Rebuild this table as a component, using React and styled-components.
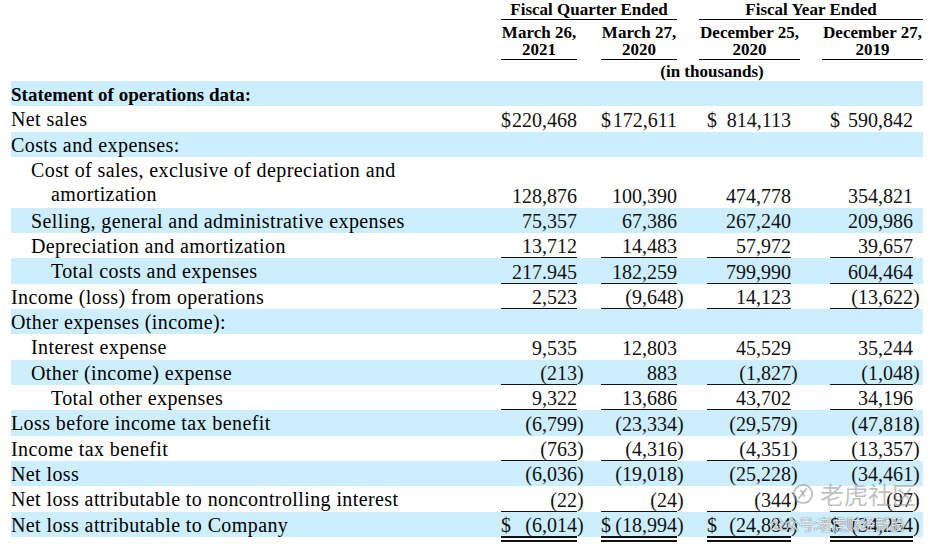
import React from 'react';
import styled, { createGlobalStyle, css } from 'styled-components';

const GlobalStyle = createGlobalStyle`
  html, body {
    margin: 0;
    padding: 0;
    background: #fff;
  }
  body {
    font-family: 'Liberation Serif', 'Times New Roman', serif;
    color: #111;
  }
`;

const COLS = '490px 100px 98px 123px 101px';

// where the figure box (and its rule) sits inside each of the four column cells
const FIG = [
  { ml: 0, w: 76 },
  { ml: 0, w: 76 },
  { ml: 8, w: 84 },
  { ml: 8, w: 83 },
];
const HEAD = [76, 76, 101, 101];

const rows = [
  { label: 'Statement of operations data:', bold: true },
  { label: 'Net sales', values: ['$220,468', '$172,611', '$ 814,113', '$ 590,842'] },
  { label: 'Costs and expenses:' },
  {
    label: 'Cost of sales, exclusive of depreciation and',
    more: 'amortization',
    indent: 1,
    values: ['128,876', '100,390', '474,778', '354,821'],
  },
  { label: 'Selling, general and administrative expenses', indent: 1, values: ['75,357', '67,386', '267,240', '209,986'] },
  { label: 'Depreciation and amortization', indent: 1, rule: 'single', values: ['13,712', '14,483', '57,972', '39,657'] },
  { label: 'Total costs and expenses', indent: 2, rule: 'single', values: ['217.945', '182,259', '799,990', '604,464'] },
  { label: 'Income (loss) from operations', rule: 'single', values: ['2,523', '(9,648)', '14,123', '(13,622)'] },
  { label: 'Other expenses (income):' },
  { label: 'Interest expense', indent: 1, values: ['9,535', '12,803', '45,529', '35,244'] },
  { label: 'Other (income) expense', indent: 1, rule: 'single', values: ['(213)', '883', '(1,827)', '(1,048)'] },
  { label: 'Total other expenses', indent: 2, rule: 'single', values: ['9,322', '13,686', '43,702', '34,196'] },
  { label: 'Loss before income tax benefit', values: ['(6,799)', '(23,334)', '(29,579)', '(47,818)'] },
  { label: 'Income tax benefit', rule: 'single', values: ['(763)', '(4,316)', '(4,351)', '(13,357)'] },
  { label: 'Net loss', values: ['(6,036)', '(19,018)', '(25,228)', '(34,461)'] },
  { label: 'Net loss attributable to noncontrolling interest', rule: 'single', values: ['(22)', '(24)', '(344)', '(97)'] },
  { label: 'Net loss attributable to Company', rule: 'double', values: ['$ (6,014)', '$(18,994)', '$ (24,884)', '$ (34,264)'] },
];

const parse = (raw) => {
  const dollar = raw.startsWith('$');
  const rest = raw.replace('$', '').trim();
  const neg = rest.endsWith(')');
  return { dollar, num: neg ? rest.slice(0, -1) : rest, neg };
};

const Page = styled.div`
  position: relative;
  width: 912px;
  height: 553px;
  padding-left: 11px;
  overflow: hidden;
`;

const HeadRow = styled.div`
  display: grid;
  grid-template-columns: ${COLS};
  padding-top: ${(p) => p.$top}px;
  font-size: 17px;
  font-weight: 700;
  line-height: 17px;
  text-align: center;
  color: #000;
`;

const HeadCell = styled.div`
  grid-column: ${(p) => p.$col};
`;

const HeadBox = styled.div`
  width: ${(p) => p.$w}px;
  padding-bottom: 1px;
  border-bottom: ${(p) => (p.$ruled ? '1px solid #000' : 'none')};
`;

const Row = styled.div`
  display: grid;
  grid-template-columns: ${COLS};
  align-items: end;
  background: ${(p) => (p.$shaded ? '#cceeff' : 'transparent')};
  font-size: 20px;
`;

const Label = styled.div`
  padding-top: 2px;
  padding-left: ${(p) => p.$indent * 20}px;
  line-height: 23.33px;
  font-weight: ${(p) => (p.$bold ? 700 : 400)};
  font-size: ${(p) => (p.$bold ? 19 : 20)}px;
  letter-spacing: ${(p) => (p.$bold ? 0 : 0.4)}px;
  white-space: nowrap;
  color: #000;
`;

const Wrapped = styled.span`
  display: block;
  padding-left: 20px;
  line-height: 25.33px;
`;

const Cell = styled.div`
  display: flex;
  align-items: flex-end;
`;

const Figure = styled.div`
  position: relative;
  margin-left: ${(p) => p.$ml}px;
  width: ${(p) => p.$w}px;
  display: flex;
  justify-content: space-between;
  line-height: 21px;
  border-bottom: 1px solid ${(p) => (p.$rule === 'single' ? '#111' : 'transparent')};

  ${(p) =>
    p.$rule === 'double' &&
    css`
      &::after {
        content: '';
        position: absolute;
        left: 0;
        right: 0;
        top: 100%;
        height: 2px;
        border-top: 2px solid #111;
        border-bottom: 2px solid #111;
      }
    `}
`;

const Paren = styled.span`
  line-height: 21px;
  padding-bottom: 1px;
  white-space: pre;
`;

const Watermark = styled.div`
  position: absolute;
  left: ${(p) => p.$x}px;
  top: ${(p) => p.$y}px;
  display: flex;
  align-items: center;
  gap: ${(p) => p.$gap || 0}px;
  font-family: 'Noto Sans CJK SC', sans-serif;
  font-size: ${(p) => p.$size}px;
  line-height: 1;
  color: ${(p) => p.$color};
  text-shadow: ${(p) => p.$shadow || 'none'};
  pointer-events: none;
  white-space: nowrap;
`;

const Logo = ({ size, stroke }) => (
  <svg width={size} height={size} viewBox="0 0 24 24" fill="none" stroke={stroke} strokeWidth="2">
    <circle cx="12" cy="12" r="10" />
    <path d="M7 17 C10 14 13 9 16 6" />
    <path d="M9 8 C11 9 13 11 13 15" />
  </svg>
);

const Value = ({ raw, col, rule }) => {
  const { dollar, num, neg } = parse(raw);
  return (
    <Cell>
      <Figure $ml={FIG[col].ml} $w={FIG[col].w} $rule={rule}>
        <span>{dollar ? '$' : ''}</span>
        <span>{num}</span>
      </Figure>
      {neg && <Paren>)</Paren>}
    </Cell>
  );
};

const App = () => {
  return (
    <Page>
      <GlobalStyle />
      <HeadRow $top={1}>
        <div />
        <HeadCell $col="2 / 4">
          <HeadBox $w={176} $ruled>
            Fiscal Quarter Ended
          </HeadBox>
        </HeadCell>
        <HeadCell $col="4 / 6">
          <HeadBox $w={224} $ruled>
            Fiscal Year Ended
          </HeadBox>
        </HeadCell>
      </HeadRow>
      <HeadRow $top={4}>
        <div />
        {[
          ['March 26,', '2021'],
          ['March 27,', '2020'],
          ['December 25,', '2020'],
          ['December 27,', '2019'],
        ].map(([a, b], i) => (
          <HeadCell key={a + b} $col={`${i + 2}`}>
            <HeadBox $w={HEAD[i]} $ruled>
              {a}
              <br />
              {b}
            </HeadBox>
          </HeadCell>
        ))}
      </HeadRow>
      <HeadRow $top={3}>
        <div />
        <HeadCell $col="2 / 6">
          <HeadBox $w={422}>(in thousands)</HeadBox>
        </HeadCell>
      </HeadRow>

      {rows.map((r, i) => (
        <Row key={r.label} $shaded={i % 2 === 0}>
          <Label $indent={r.indent || 0} $bold={r.bold}>
            {r.label}
            {r.more && <Wrapped>{r.more}</Wrapped>}
          </Label>
          {r.values
            ? r.values.map((v, c) => <Value key={c} raw={v} col={c} rule={r.rule} />)
            : null}
        </Row>
      ))}

      <Watermark $x={792} $y={482} $size={24} $gap={6} $color="rgba(150,150,150,0.6)">
        <Logo size={22} stroke="rgba(150,150,150,0.6)" />
        老虎社区
      </Watermark>
      <Watermark
        $x={770}
        $y={517}
        $size={14.5}
        $color="rgba(255,255,255,0.85)"
        $shadow="0 0 1px rgba(100,100,100,0.9), 0 0 1px rgba(100,100,100,0.9)"
      >
        公众号:老虎财经新股
      </Watermark>
    </Page>
  );
};

export default App;
